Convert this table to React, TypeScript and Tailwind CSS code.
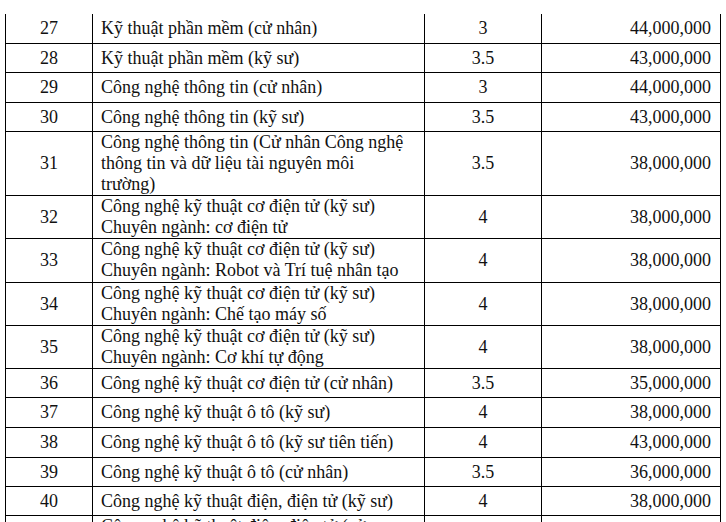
import React from "react";

type Row = { n: string; name: string[]; y: string; fee: string; h: number };

const rows: Row[] = [
  { n: "27", name: ["Kỹ thuật phần mềm (cử nhân)"], y: "3", fee: "44,000,000", h: 30 },
  { n: "28", name: ["Kỹ thuật phần mềm (kỹ sư)"], y: "3.5", fee: "43,000,000", h: 29 },
  { n: "29", name: ["Công nghệ thông tin (cử nhân)"], y: "3", fee: "44,000,000", h: 30 },
  { n: "30", name: ["Công nghệ thông tin (kỹ sư)"], y: "3.5", fee: "43,000,000", h: 29 },
  {
    n: "31",
    name: ["Công nghệ thông tin (Cử nhân Công nghệ", "thông tin và dữ liệu tài nguyên môi", "trường)"],
    y: "3.5",
    fee: "38,000,000",
    h: 64,
  },
  { n: "32", name: ["Công nghệ kỹ thuật cơ điện tử (kỹ sư)", "Chuyên ngành: cơ điện tử"], y: "4", fee: "38,000,000", h: 43 },
  {
    n: "33",
    name: ["Công nghệ kỹ thuật cơ điện tử (kỹ sư)", "Chuyên ngành: Robot và Trí tuệ nhân tạo"],
    y: "4",
    fee: "38,000,000",
    h: 44,
  },
  { n: "34", name: ["Công nghệ kỹ thuật cơ điện tử (kỹ sư)", "Chuyên ngành: Chế tạo máy số"], y: "4", fee: "38,000,000", h: 43 },
  { n: "35", name: ["Công nghệ kỹ thuật cơ điện tử (kỹ sư)", "Chuyên ngành: Cơ khí tự động"], y: "4", fee: "38,000,000", h: 43 },
  { n: "36", name: ["Công nghệ kỹ thuật cơ điện tử (cử nhân)"], y: "3.5", fee: "35,000,000", h: 29 },
  { n: "37", name: ["Công nghệ kỹ thuật ô tô (kỹ sư)"], y: "4", fee: "38,000,000", h: 30 },
  { n: "38", name: ["Công nghệ kỹ thuật ô tô (kỹ sư tiên tiến)"], y: "4", fee: "43,000,000", h: 30 },
  { n: "39", name: ["Công nghệ kỹ thuật ô tô (cử nhân)"], y: "3.5", fee: "36,000,000", h: 29 },
  { n: "40", name: ["Công nghệ kỹ thuật điện, điện tử (kỹ sư)"], y: "4", fee: "38,000,000", h: 29 },
  { n: "", name: ["Công nghệ kỹ thuật điện, điện tử (cử", "nhân)"], y: "", fee: "", h: 43 },
];

export default function App() {
  return (
    <div
      className="w-[726px] h-[522px] overflow-hidden bg-white text-[#111] pt-[14px] pl-[5px]"
      style={{ fontFamily: '"Liberation Serif", "Times New Roman", serif' }}
    >
      <div className="w-[716px] border-l border-black text-[18px] leading-[21px]">
        {rows.map((r, idx) => {
          const multi = r.name.length > 1;
          return (
            <div
              key={idx}
              className="grid grid-cols-[87px_332px_117px_179px] border-b border-black"
              style={{ height: r.h }}
            >
              <div className="border-r border-black flex items-center justify-center">{r.n}</div>
              <div
                className={
                  "border-r border-black pl-[8px] flex flex-col whitespace-nowrap " +
                  (multi ? "justify-start" : "justify-center")
                }
              >
                {r.name.map((l, i) => (
                  <div key={i}>{l}</div>
                ))}
              </div>
              <div className="border-r border-black flex items-center justify-center">{r.y}</div>
              <div className="border-r border-black flex items-center justify-end pr-[9px]">{r.fee}</div>
            </div>
          );
        })}
      </div>
    </div>
  );
}
